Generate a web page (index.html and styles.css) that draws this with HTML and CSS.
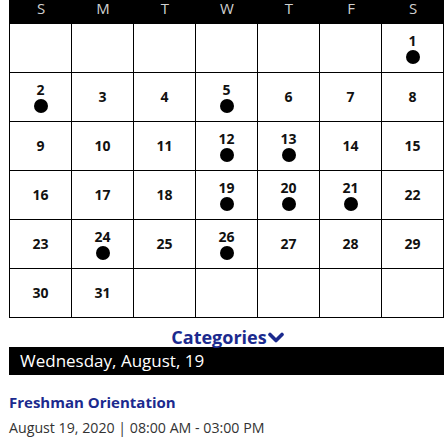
FILE: index.html
```html
<!DOCTYPE html>
<html>
<head>
<meta charset="utf-8">
<link rel="stylesheet" href="styles.css">
</head>
<body>
<div class="page">
  <div class="cal">
    <div class="dow">
      <span>S</span><span>M</span><span>T</span><span>W</span><span>T</span><span>F</span><span>S</span>
    </div>
    <div class="grid">
      <div class="cell"></div><div class="cell"></div><div class="cell"></div><div class="cell"></div><div class="cell"></div><div class="cell"></div>
      <div class="cell"><span class="num">1</span><span class="dot"></span></div>
      <div class="cell"><span class="num">2</span><span class="dot"></span></div>
      <div class="cell"><span class="num">3</span></div>
      <div class="cell"><span class="num">4</span></div>
      <div class="cell"><span class="num">5</span><span class="dot"></span></div>
      <div class="cell"><span class="num">6</span></div>
      <div class="cell"><span class="num">7</span></div>
      <div class="cell"><span class="num">8</span></div>
      <div class="cell"><span class="num">9</span></div>
      <div class="cell"><span class="num">10</span></div>
      <div class="cell"><span class="num">11</span></div>
      <div class="cell"><span class="num">12</span><span class="dot"></span></div>
      <div class="cell"><span class="num">13</span><span class="dot"></span></div>
      <div class="cell"><span class="num">14</span></div>
      <div class="cell"><span class="num">15</span></div>
      <div class="cell"><span class="num">16</span></div>
      <div class="cell"><span class="num">17</span></div>
      <div class="cell"><span class="num">18</span></div>
      <div class="cell"><span class="num">19</span><span class="dot"></span></div>
      <div class="cell"><span class="num">20</span><span class="dot"></span></div>
      <div class="cell"><span class="num">21</span><span class="dot"></span></div>
      <div class="cell"><span class="num">22</span></div>
      <div class="cell"><span class="num">23</span></div>
      <div class="cell"><span class="num">24</span><span class="dot"></span></div>
      <div class="cell"><span class="num">25</span></div>
      <div class="cell"><span class="num">26</span><span class="dot"></span></div>
      <div class="cell"><span class="num">27</span></div>
      <div class="cell"><span class="num">28</span></div>
      <div class="cell"><span class="num">29</span></div>
      <div class="cell"><span class="num">30</span></div>
      <div class="cell"><span class="num">31</span></div>
      <div class="cell"></div><div class="cell"></div><div class="cell"></div><div class="cell"></div><div class="cell"></div>
    </div>
  </div>
  <div class="cats">Categories<svg class="chev" width="16" height="12" viewBox="0 0 16 12"><path d="M2 2.5 L8 8.5 L14 2.5" fill="none" stroke="#1b2a8e" stroke-width="3.6" stroke-linecap="round" stroke-linejoin="round"/></svg></div>
  <div class="daybar">Wednesday, August, 19</div>
  <div class="event">
    <div class="etitle">Freshman Orientation</div>
    <div class="etime">August 19, 2020 | 08:00 AM - 03:00 PM</div>
  </div>
</div>
</body>
</html>
```

FILE: styles.css
```css
html, body {
  margin: 0;
  padding: 0;
  background: #fff;
}
body {
  font-family: "Open Sans", "Noto Sans", sans-serif;
  color: #222;
  overflow: hidden;
}
.page {
  margin-left: 9px;
  width: 435px;
  margin-top: -6px;
}
.dow {
  background: #000;
  height: 30px;
  display: grid;
  grid-template-columns: repeat(7, 62px);
  padding-left: 1px;
  align-items: center;
}
.dow span {
  text-align: center;
  color: #d0d0d0;
  font-size: 15px;
  line-height: 16px;
  margin-top: -2px;
}
.grid {
  display: grid;
  grid-template-columns: repeat(7, 62px);
  grid-auto-rows: 49px;
  border-left: 1px solid #000;
}
.cell {
  border-right: 1px solid #000;
  border-bottom: 1px solid #000;
  display: flex;
  flex-direction: column;
  align-items: center;
  justify-content: center;
}
.num {
  font-weight: 700;
  font-size: 14px;
  line-height: 16px;
  color: #111;
}
.dot {
  width: 14px;
  height: 14px;
  border-radius: 50%;
  background: #000;
  margin-top: 1px;
}
.cats {
  display: flex;
  justify-content: center;
  align-items: center;
  color: #1b2a8e;
  font-weight: 700;
  font-size: 18px;
  line-height: 20px;
  margin-top: 9px;
  padding-left: 2px;
}
.chev {
  margin-left: 1px;
  margin-top: 2px;
}
.daybar {
  background: #000;
  color: #fff;
  font-size: 17px;
  line-height: 28px;
  height: 28px;
  padding-left: 11px;
}
.event {
  padding-top: 16px;
}
.etitle {
  color: #1b2a8e;
  font-weight: 700;
  font-size: 15px;
  line-height: 22px;
}
.etime {
  color: #333;
  font-size: 14.2px;
  line-height: 22px;
  margin-top: 4px;
}
```
